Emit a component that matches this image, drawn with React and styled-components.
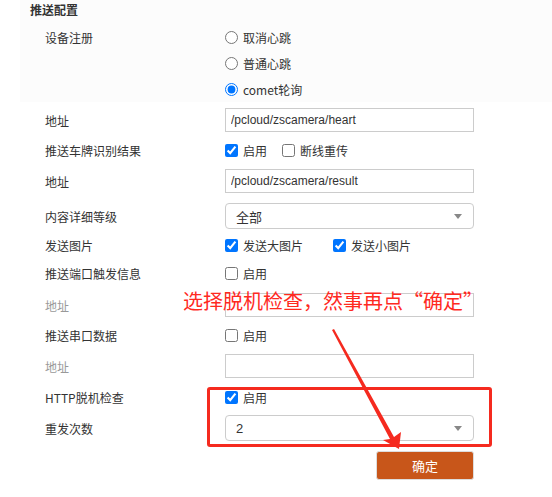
import styled, { createGlobalStyle } from "styled-components";

const GlobalStyle = createGlobalStyle`
  body {
    margin: 0;
    background: #fff;
    font-family: "Noto Sans CJK SC", "Liberation Sans", sans-serif;
    color: #333;
  }
`;

const Page = styled.div`
  position: relative;
  width: 552px;
  height: 497px;
  overflow: hidden;
`;

const Panel = styled.div`
  margin-left: 20px;
  background: #fcfcfc;
`;

const Title = styled.div`
  height: 24px;
  line-height: 20px;
  padding-left: 10px;
  font-size: 12px;
  font-weight: 700;
  color: #333;
`;

const Row = styled.div`
  display: grid;
  grid-template-columns: 180px 250px;
  align-items: center;
  height: ${(p) => p.$h}px;
  padding-left: ${(p) => (p.$inset ? 25 : 45)}px;
`;

const Label = styled.div`
  font-size: 12px;
  color: ${(p) => (p.$muted ? "#999" : "#333")};
`;

const Options = styled.div`
  display: flex;
  align-items: center;
  gap: ${(p) => p.$gap || 15}px;
`;

const Option = styled.label`
  display: flex;
  align-items: center;
  gap: 5px;
  font-size: 12px;
  color: #333;

  input {
    margin: 0;
    width: 13px;
    height: 13px;
  }
`;

const TextInput = styled.input`
  box-sizing: border-box;
  width: 249px;
  height: 24px;
  border: 1px solid #ccc;
  padding: 0 5px;
  font-family: "Liberation Sans", "Noto Sans CJK SC", sans-serif;
  font-size: 12px;
  color: #333;
  outline: none;
`;

const Select = styled.div`
  box-sizing: border-box;
  width: 249px;
  height: 26px;
  border: 1px solid #ccc;
  border-radius: 4px;
  padding: 0 10px;
  display: flex;
  align-items: center;
  justify-content: space-between;
  font-family: "Liberation Sans", "Noto Sans CJK SC", sans-serif;
  font-size: 13px;
  color: #333;

  &::after {
    content: "";
    border-left: 4px solid transparent;
    border-right: 4px solid transparent;
    border-top: 5px solid #888;
    margin-right: 1px;
  }
`;

const Actions = styled.div`
  width: 474px;
  display: flex;
  justify-content: flex-end;
  padding-top: 5px;
`;

const Submit = styled.button`
  width: 98px;
  height: 29px;
  border: 1px solid #ddd;
  border-radius: 3px;
  background: #c8561a;
  color: #fff;
  font-family: "Noto Sans CJK SC", sans-serif;
  font-size: 13px;
`;

const Note = styled.div`
  position: absolute;
  left: 183px;
  top: 288px;
  font-size: 20px;
  line-height: 26px;
  color: #ff2a1f;
  white-space: nowrap;
`;

const Highlight = styled.div`
  position: absolute;
  left: 207px;
  top: 387px;
  width: 285px;
  height: 60px;
  box-sizing: border-box;
  border: 3px solid #f52a1f;
  border-radius: 3px;
`;

const Arrow = styled.svg`
  position: absolute;
  left: 0;
  top: 0;
  pointer-events: none;
`;

const Check = ({ checked, children }) => (
  <Option>
    <input type="checkbox" defaultChecked={checked} />
    {children}
  </Option>
);

const Radio = ({ checked, children }) => (
  <Option>
    <input type="radio" name="reg" defaultChecked={checked} />
    {children}
  </Option>
);

export default function App() {
  return (
    <Page>
      <GlobalStyle />
      <Panel>
        <Title>推送配置</Title>
        <Row $h={26} $inset>
          <Label>设备注册</Label>
          <Radio>取消心跳</Radio>
        </Row>
        <Row $h={26} $inset>
          <Label />
          <Radio>普通心跳</Radio>
        </Row>
        <Row $h={26} $inset>
          <Label />
          <Radio checked>comet轮询</Radio>
        </Row>
      </Panel>
      <Row $h={36}>
        <Label>地址</Label>
        <TextInput defaultValue="/pcloud/zscamera/heart" />
      </Row>
      <Row $h={24}>
        <Label>推送车牌识别结果</Label>
        <Options>
          <Check checked>启用</Check>
          <Check>断线重传</Check>
        </Options>
      </Row>
      <Row $h={38}>
        <Label>地址</Label>
        <TextInput defaultValue="/pcloud/zscamera/result" />
      </Row>
      <Row $h={32}>
        <Label>内容详细等级</Label>
        <Select>全部</Select>
      </Row>
      <Row $h={26}>
        <Label>发送图片</Label>
        <Options $gap={30}>
          <Check checked>发送大图片</Check>
          <Check checked>发送小图片</Check>
        </Options>
      </Row>
      <Row $h={30}>
        <Label>推送端口触发信息</Label>
        <Check>启用</Check>
      </Row>
      <Row $h={34}>
        <Label $muted>地址</Label>
        <TextInput />
      </Row>
      <Row $h={26}>
        <Label>推送串口数据</Label>
        <Check>启用</Check>
      </Row>
      <Row $h={36}>
        <Label $muted>地址</Label>
        <TextInput />
      </Row>
      <Row $h={26}>
        <Label>HTTP脱机检查</Label>
        <Check checked>启用</Check>
      </Row>
      <Row $h={36}>
        <Label>重发次数</Label>
        <Select>2</Select>
      </Row>
      <Actions>
        <Submit>确定</Submit>
      </Actions>

      <Note>选择脱机检查，然事再点“确定”</Note>
      <Highlight />
      <Arrow width="552" height="497" viewBox="0 0 552 497">
        <polygon
          points="332,330 334,329 394,437 401,432 399,449 383,440 390,439"
          fill="#f52a1f"
        />
      </Arrow>
    </Page>
  );
}
